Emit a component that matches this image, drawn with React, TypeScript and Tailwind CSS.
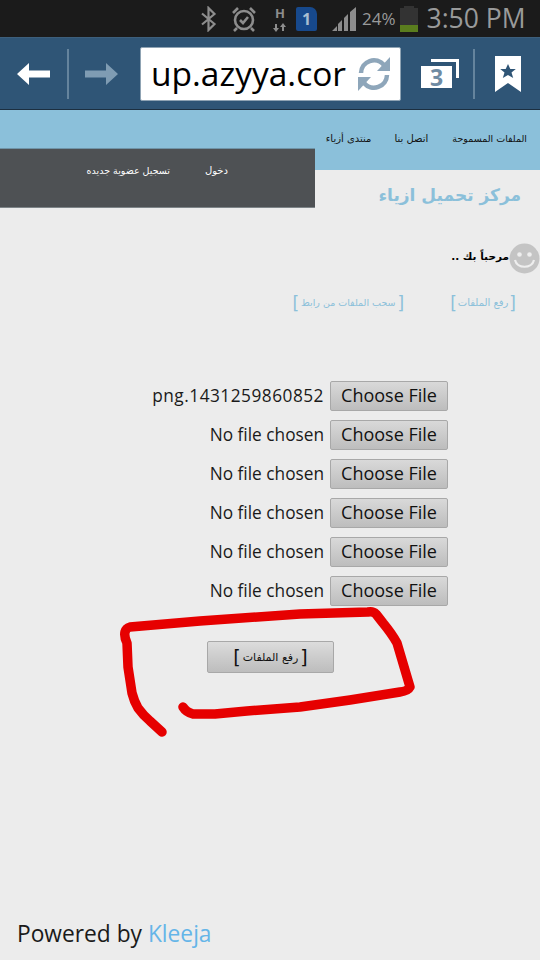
import React from "react";

const arabic = "font-['DejaVu_Sans','Noto_Sans',sans-serif]";
const droid = "font-['Open_Sans','Noto_Sans',sans-serif]";

function StatusBar() {
  return (
    <div className={`flex h-[38px] items-center border-b border-[#3d5f7c] bg-[#1b1b1b] text-[#999a9a] ${droid}`}>
      <div className="ml-[199px] flex items-center">
        <svg width="20" height="26" viewBox="0 0 20 26" fill="none" stroke="#8d8d8d" strokeWidth="2.2">
          <path d="M3 7.500 15.500 18 9.500 24V2l6 6L3 18.500" />
        </svg>
        <svg className="ml-[12px]" width="26" height="28" viewBox="0 0 26 28" fill="none" stroke="#8d8d8d" strokeWidth="2.6">
          <circle cx="13" cy="15" r="9" />
          <path d="M9 15l3 3 5-6" />
          <path d="M2 8l5-5M24 8l-5-5M6 23l-3 3M20 23l3 3" />
        </svg>
        <div className="ml-[16px] flex w-[14px] flex-col items-center text-[#8d8d8d]">
          <span className="text-[13px] leading-[15px] font-bold">H</span>
          <svg className="mt-[2px]" width="14" height="9" viewBox="0 0 14 9" fill="#8d8d8d">
            <path d="M3 9 0 5h2V1h2v4h2zM10 0l3 4h-2v4H9V4H7z" />
          </svg>
        </div>
        <div className="ml-[9px] flex h-[24px] w-[21px] items-center justify-center rounded-[2px] rounded-tr-[7px] bg-[#17498c] text-[16px] font-bold leading-none text-[#a9bdd1]">
          1
        </div>
        <svg className="ml-[15px]" width="25" height="24" viewBox="0 0 25 24" fill="#8d8d8d">
          <path d="M0 24 5 19V24zM6 24V17L10 13V24zM12 24V11L16 7V24zM18 24V5L24 0V24z" />
        </svg>
        <span className="ml-[5px] text-[17px] leading-none">24%</span>
        <div className="ml-[4px] flex h-[26px] w-[18px] flex-col">
          <div className="mx-auto h-[2px] w-[10px] bg-[#333333]" />
          <div className="h-[17px] bg-[#333333]" />
          <div className="h-[7px] bg-[#5a7d1e]" />
        </div>
        <span className="ml-[9px] text-[26.500px] leading-none whitespace-nowrap">3:50 PM</span>
      </div>
    </div>
  );
}

function Toolbar() {
  return (
    <div className="flex h-[72px] items-center border-b border-[#1c2f40] bg-[#2f5576]">
      <svg className="ml-[17px]" width="33" height="22" viewBox="0 0 33 22" fill="#ffffff">
        <path d="M0 11 12 0V7.500H33V14.500H12V22Z" />
      </svg>
      <div className="ml-[17px] h-[50px] w-[2px] bg-[#65849d]" />
      <svg className="ml-[16px]" width="33" height="22" viewBox="0 0 33 22" fill="#7f9cb3">
        <path d="M33 11 21 0V7.500H0V14.500H21V22Z" />
      </svg>
      <div className="ml-[22px] flex h-[54px] w-[261px] items-center overflow-hidden rounded-[2px] border border-[#8fa3b3] bg-white">
        <span className={`ml-[10px] w-[206px] text-[33.500px] leading-none whitespace-nowrap text-black ${droid}`}>
          up.azyya.cor
        </span>
        <svg width="34" height="36" viewBox="0 0 34 36" fill="none">
          <path d="M4 17A13 13 0 0 1 27 9" stroke="#8ea6ba" strokeWidth="4.500" />
          <path d="M33 1V15H20Z" fill="#8ea6ba" />
          <path d="M30 19A13 13 0 0 1 7 27" stroke="#8ea6ba" strokeWidth="4.500" />
          <path d="M1 35V21H14Z" fill="#8ea6ba" />
        </svg>
      </div>
      <div className="relative ml-[20px] h-[29px] w-[38px]">
        <div className="absolute top-0 right-0 h-[19px] w-[28px] border-t-[3px] border-r-[3px] border-white" />
        <div className={`absolute bottom-0 left-0 flex h-[22px] w-[31px] items-center justify-center bg-white text-[23px] font-bold leading-none text-[#6f8ba3] ${droid}`}>
          3
        </div>
      </div>
      <div className="ml-[14px] h-[50px] w-[2px] bg-[#65849d]" />
      <svg className="ml-[20px]" width="26" height="36" viewBox="0 0 26 36">
        <path d="M0 0H26V36L13 27 0 36Z" fill="#ffffff" />
        <path d="M13 8l2.300 5h5.500l-4.300 3.500 1.700 5.500L13 19l-5.200 3 1.700-5.500L5.200 13h5.500Z" fill="#2f5576" />
      </svg>
    </div>
  );
}

function Header() {
  return (
    <div className={`flex ${arabic}`} dir="ltr">
      <div className="w-[315px]">
        <div className="h-[38px] bg-[#8bc0da]" />
        <div className="flex h-[60px] items-start border-y border-t-[#6f94a8] border-b-[#7d8488] bg-[#4e5154] pt-[14px] text-[10px] leading-[16px] whitespace-nowrap text-white" dir="rtl">
          <span className="mr-[87px]">دخول</span>
          <span className="mr-[35px] text-[9.500px]">تسجيل عضوية جديده</span>
        </div>
      </div>
      <div className="flex-1">
        <div className="flex h-[60px] items-start justify-end bg-[#8bc0da] pt-[21px] text-[10px] leading-[16px] whitespace-nowrap text-[#111111]">
          <span>منتدى أزياء</span>
          <span className="ml-[23px]">اتصل بنا</span>
          <span className="ml-[24px] mr-[13px] text-[9.500px]">الملفات المسموحة</span>
        </div>
        <div className="flex h-[38px] items-start justify-end pt-[10px] pr-[19px] text-[17px] leading-[30px] font-bold whitespace-nowrap text-[#8bc0da]">
          مركز تحميل ازياء
        </div>
      </div>
    </div>
  );
}

function FileRow({ name, wide }: { name: string; wide?: boolean }) {
  return (
    <div className="flex h-[39px] items-start justify-end pr-[92px]">
      <span className={`mr-[6px] h-[30px] text-[17.250px] leading-[29px] text-[#1a1a1a] ${wide ? "tracking-[0.5px]" : ""}`}>{name}</span>
      <div className="flex h-[30px] w-[118px] items-center justify-center rounded-[2px] border border-[#a8a8a8] bg-gradient-to-b from-[#d9d9d9] to-[#bdbdbd] pb-[2px] text-[18px] leading-none text-[#111111]">
        Choose File
      </div>
    </div>
  );
}

function Scribble() {
  return (
    <svg className="pointer-events-none absolute top-[600px] left-[100px]" width="330" height="150" viewBox="100 600 330 150" fill="none">
      <path
        d="M162 732 L150 721 Q143 715 138 708 Q134 701 132 693 L128 667 L127 643 Q124 637 125 632 Q126 628 130 627 L200 621 L300 614 L368 612 Q373 611 376 614 L383 623 Q392 634 397 643 L410 687 Q408 691 400 692 L350 700 L300 707 L247 711 L215 714 L193 714 Q186 712 183 707"
        stroke="#e60000"
        strokeWidth="9.500"
        strokeLinecap="round"
        strokeLinejoin="round"
      />
    </svg>
  );
}

function Bracketed({ text, bracket, inner }: { text: string; bracket: string; inner: string }) {
  return (
    <span className="flex items-center whitespace-nowrap">
      <span className={`${bracket} leading-none`}>[</span>
      <span className={inner}>{text}</span>
      <span className={`${bracket} leading-none`}>]</span>
    </span>
  );
}

function Body() {
  return (
    <div className="flex flex-col">
      <div className={`mt-[35px] flex h-[31px] items-center justify-start ${arabic}`} dir="rtl">
        <svg width="31" height="31" viewBox="0 0 31 31" className="shrink-0">
          <circle cx="15.500" cy="15.500" r="15" fill="#c4c4c4" />
          <circle cx="10.500" cy="11.500" r="2.300" fill="#eeeeee" />
          <circle cx="20.500" cy="11.500" r="2.300" fill="#eeeeee" />
          <path d="M6 17C8 26 23 26 25 17" stroke="#eeeeee" strokeWidth="2.200" fill="none" />
        </svg>
        <span className="mb-[4px] text-[10.500px] font-bold leading-none text-black">مرحباً بك ..</span>
      </div>
      <div className={`mt-[17px] flex h-[24px] items-center text-[10px] leading-none text-[#8bc0da] ${arabic}`} dir="rtl">
        <span className="mr-[24px]"><Bracketed text="رفع الملفات" bracket="text-[17px]" inner="mx-[1px]" /></span>
        <span className="mr-[46px] text-[9.500px]"><Bracketed text="سحب الملفات من رابط" bracket="text-[17px]" inner="mx-[2px]" /></span>
      </div>
      <div className={`mt-[66px] ${droid}`}>
        <FileRow name="png.1431259860852" wide />
        <FileRow name="No file chosen" />
        <FileRow name="No file chosen" />
        <FileRow name="No file chosen" />
        <FileRow name="No file chosen" />
        <FileRow name="No file chosen" />
      </div>
      <div className="mt-[26px] flex justify-start pl-[207px]">
        <div className={`flex h-[32px] w-[127px] items-center justify-center rounded-[2px] border border-[#a8a8a8] bg-gradient-to-b from-[#dcdcdc] to-[#bdbdbd] text-[11px] leading-none text-[#111111] ${arabic}`} dir="rtl">
          <Bracketed text="رفع الملفات" bracket="text-[19px]" inner="mx-[2px]" />
        </div>
      </div>
      <div className={`mt-[245px] pl-[17px] text-[22.750px] leading-[32px] text-[#1a1a1a] ${droid}`}>
        Powered by <span className="text-[#64b5e8]">Kleeja</span>
      </div>
    </div>
  );
}

export default function App() {
  return (
    <div className="relative h-[960px] w-[540px] overflow-hidden bg-[#ececec]">
      <StatusBar />
      <Toolbar />
      <Header />
      <Body />
      <Scribble />
    </div>
  );
}
